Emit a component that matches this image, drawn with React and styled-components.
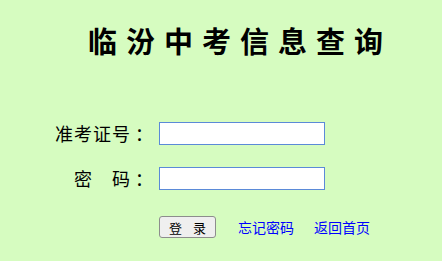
import styled, { createGlobalStyle } from 'styled-components';

const GlobalStyle = createGlobalStyle`
  html, body {
    margin: 0;
    padding: 0;
    background: #d6fcc0;
  }
  body {
    font-family: "Noto Sans CJK SC", "Liberation Sans", sans-serif;
  }
`;

const Page = styled.div`
  width: 442px;
  height: 261px;
  padding-top: 26px;
  box-sizing: border-box;
`;

const Title = styled.h1`
  margin: 0;
  padding-left: 88px;
  font-size: 29px;
  line-height: 1;
  font-weight: 700;
  letter-spacing: 9px;
  color: #000;
  white-space: nowrap;
`;

const Form = styled.form`
  display: grid;
  grid-template-columns: 153px 166px;
  column-gap: 6px;
  row-gap: 22px;
  margin-top: 67px;
`;

const Label = styled.label`
  display: flex;
  justify-content: flex-end;
  font-size: 18px;
  line-height: 23px;
  letter-spacing: 1px;
  color: #000;
  white-space: pre;
`;

const Colon = styled.span`
  margin-left: 4px;
  letter-spacing: 0;
`;

const Field = styled.input`
  width: 166px;
  height: 23px;
  box-sizing: border-box;
  margin: 0;
  border: 1px solid #5b8ad8;
  background: #fff;
  outline: none;
`;

const Actions = styled.div`
  display: flex;
  align-items: center;
  gap: 20px;
  margin-top: 26px;
  padding-left: 159px;
`;

const Button = styled.button`
  width: 57px;
  height: 22px;
  margin: 0 2px 0 0;
  padding: 0;
  border: 1px solid #8d8d8d;
  border-radius: 3px;
  background: #efefef;
  font-family: inherit;
  font-size: 13px;
  letter-spacing: 4px;
  text-indent: 4px;
  color: #000;
`;

const Link = styled.a`
  font-size: 14px;
  color: #0000ff;
  text-decoration: none;
`;

export default function App() {
  return (
    <Page>
      <GlobalStyle />
      <Title>临汾中考信息查询</Title>
      <Form onSubmit={(e) => e.preventDefault()}>
        <Label htmlFor="zkzh">准考证号<Colon>：</Colon></Label>
        <Field id="zkzh" type="text" />
        <Label htmlFor="mm">密　码<Colon>：</Colon></Label>
        <Field id="mm" type="password" />
      </Form>
      <Actions>
        <Button type="button">登 录</Button>
        <Link href="#">忘记密码</Link>
        <Link href="#">返回首页</Link>
      </Actions>
    </Page>
  );
}
